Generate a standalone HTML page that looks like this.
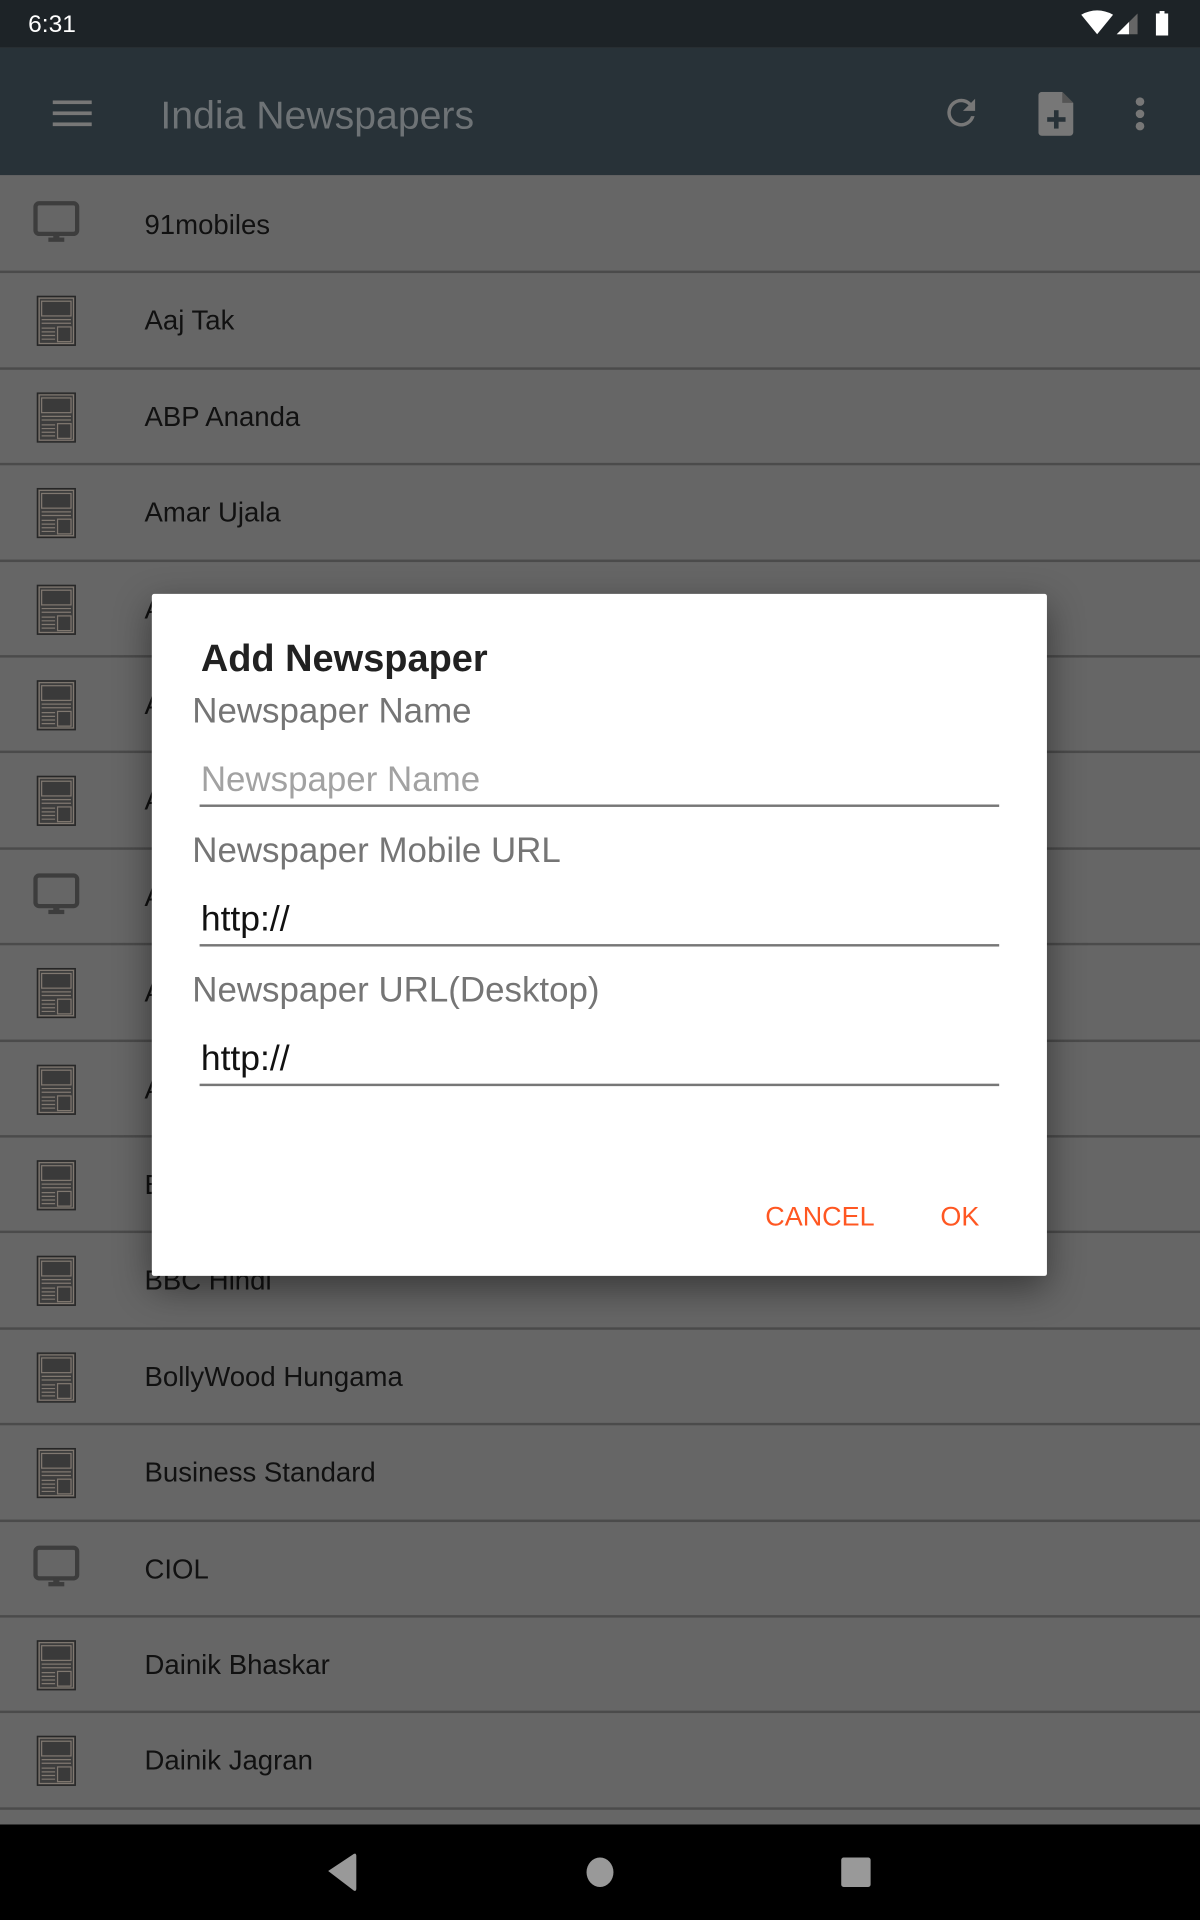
<!DOCTYPE html>
<html><head><meta charset="utf-8"><style>
*{margin:0;padding:0;box-sizing:border-box}
html,body{width:1200px;height:1920px;overflow:hidden;background:#000}
#c{position:absolute;left:0;top:0;width:980px;height:1568px;transform:scale(1.2244898);transform-origin:0 0;font-family:"Liberation Sans",sans-serif;background:#666}
.sb{position:absolute;left:0;top:0;width:980px;height:39px;background:#1d2327}
.ab{position:absolute;left:0;top:39px;width:980px;height:104px;background:#283238}
.row{position:absolute;left:0;width:980px;height:78.4px;border-bottom:2px solid #4b4b4b}
.row span{position:absolute;left:118px;top:26px;font-size:22.5px;color:#111}
.ic{position:absolute;left:26px;top:18px}
.dlg{position:absolute;left:124px;top:485px;width:731px;height:557px;background:#fff;border-radius:2px;box-shadow:0 10px 30px rgba(0,0,0,.45)}
.t{position:absolute;white-space:nowrap}
.ln{position:absolute;left:39px;width:653px;height:2px;background:#777}
.lb{font-size:28.5px;color:#757575;left:33px}
</style></head><body><div id="c">
<div class="sb">
<div class="t" style="left:23px;top:9px;font-size:20px;color:#fff">6:31</div>
<svg style="position:absolute;left:880px;top:8px" width="90" height="22"><path d="M3 4 Q16 -3 29 4 L16 20 Z" fill="#fff"/><path d="M49 3 L49 20 L32 20 Z" fill="#666"/><path d="M42 10 L42 20 L32 20 Z" fill="#fff"/><rect x="64" y="3" width="10" height="18" fill="#fff"/><rect x="67" y="1" width="4" height="3" fill="#fff"/></svg>
</div>
<div class="ab">
<svg style="position:absolute;left:43px;top:43px" width="32" height="22"><rect y="0" width="32" height="3" fill="#777"/><rect y="9" width="32" height="3" fill="#777"/><rect y="18" width="32" height="3" fill="#777"/></svg>
<div class="t" style="left:131px;top:37px;font-size:32px;color:#6e7376">India Newspapers</div>
<svg style="position:absolute;left:768px;top:36px" width="34" height="34" viewBox="0 0 24 24"><path d="M17.65 6.35A7.95 7.95 0 0 0 12 4a8 8 0 1 0 7.73 10h-2.08A6 6 0 1 1 12 6c1.66 0 3.14.69 4.22 1.78L13 11h7V4l-2.35 2.35z" fill="#777"/></svg>
<svg style="position:absolute;left:848px;top:36px" width="30" height="36" viewBox="0 0 20 24"><path d="M2 0h11l6 6v16a2 2 0 0 1-2 2H2a2 2 0 0 1-2-2V2a2 2 0 0 1 2-2z" fill="#777"/><path d="M13 0v6h6" fill="#555"/><rect x="8.5" y="10" width="2.5" height="10" fill="#283238"/><rect x="4.8" y="13.8" width="10" height="2.5" fill="#283238"/></svg>
<svg style="position:absolute;left:925px;top:40px" width="12" height="28"><circle cx="6" cy="4" r="3.5" fill="#777"/><circle cx="6" cy="14" r="3.5" fill="#777"/><circle cx="6" cy="24" r="3.5" fill="#777"/></svg>
</div>
<div id="list"></div>
<div style="position:absolute;left:0;top:1490px;width:980px;height:78px;background:#000">
<svg style="position:absolute;left:265px;top:22px" width="460" height="34"><path d="M3 16 L24 2 Q26 1 26 4 L26 30 Q26 33 24 32 Z" fill="#999"/><ellipse cx="225" cy="17" rx="11" ry="12" fill="#999"/><rect x="422" y="5" width="24" height="24" rx="2" fill="#999"/></svg>
</div>
<div class="dlg">
<div class="t" style="left:40px;top:35px;font-size:31px;font-weight:bold;color:#212121">Add Newspaper</div>
<div class="t lb" style="top:80px">Newspaper Name</div>
<div class="t" style="left:40px;top:136px;font-size:28.5px;color:#a2a2a2">Newspaper Name</div>
<div class="ln" style="top:172px"></div>
<div class="t lb" style="top:194px">Newspaper Mobile URL</div>
<div class="t" style="left:40px;top:250px;font-size:29px;color:#111">http://</div>
<div class="ln" style="top:286px"></div>
<div class="t lb" style="top:308px">Newspaper URL(Desktop)</div>
<div class="t" style="left:40px;top:364px;font-size:29px;color:#111">http://</div>
<div class="ln" style="top:400px"></div>
<div class="t" style="left:501px;top:496px;font-size:22px;color:#ff5722">CANCEL</div>
<div class="t" style="left:644px;top:496px;font-size:22px;color:#ff5722">OK</div>
</div>
</div>
<script>
(function(){
var names=["91mobiles","Aaj Tak","ABP Ananda","Amar Ujala","Anandabazar","Andhra Jyothy","Asianet News","Atlas","Asian Age","Assam Tribune","Bartaman","BBC Hindi","BollyWood Hungama","Business Standard","CIOL","Dainik Bhaskar","Dainik Jagran","Deccan Herald"];
var mon={0:1,7:1,14:1};
var mi='<svg class="ic" width="42" height="38"><rect x="3" y="3" width="34" height="25" rx="3" fill="none" stroke="#3d3d3d" stroke-width="3.5"/><rect x="17.5" y="28" width="5" height="4" fill="#3d3d3d"/><rect x="13.5" y="31" width="13" height="3.5" fill="#3d3d3d"/></svg>';
var ni='<svg class="ic" width="40" height="44" style="top:17px"><rect x="4.5" y="2" width="31" height="40" fill="#3d3d3d" stroke="#262626"/><rect x="6" y="3.5" width="28" height="37" fill="none" stroke="#807870" stroke-width="1"/><rect x="8" y="6" width="24" height="12" fill="#3a3a3a" stroke="#807870" stroke-width="1"/><g stroke="#807870" stroke-width="1"><line x1="8" y1="21" x2="32" y2="21"/><line x1="8" y1="24" x2="32" y2="24"/><line x1="8" y1="28" x2="19" y2="28"/><line x1="8" y1="31" x2="19" y2="31"/><line x1="8" y1="34" x2="19" y2="34"/><line x1="8" y1="37" x2="19" y2="37"/></g><rect x="21" y="27" width="11" height="12" fill="#3a3a3a" stroke="#807870" stroke-width="1"/></svg>';
var h='';for(var i=0;i<names.length;i++){var y=145+i*78.4;h+='<div class="row" style="top:'+y+'px">'+(mon[i]?mi:ni)+'<span>'+names[i]+'</span></div>';}
document.getElementById('list').innerHTML=h;
})();
</script>
</body></html>
